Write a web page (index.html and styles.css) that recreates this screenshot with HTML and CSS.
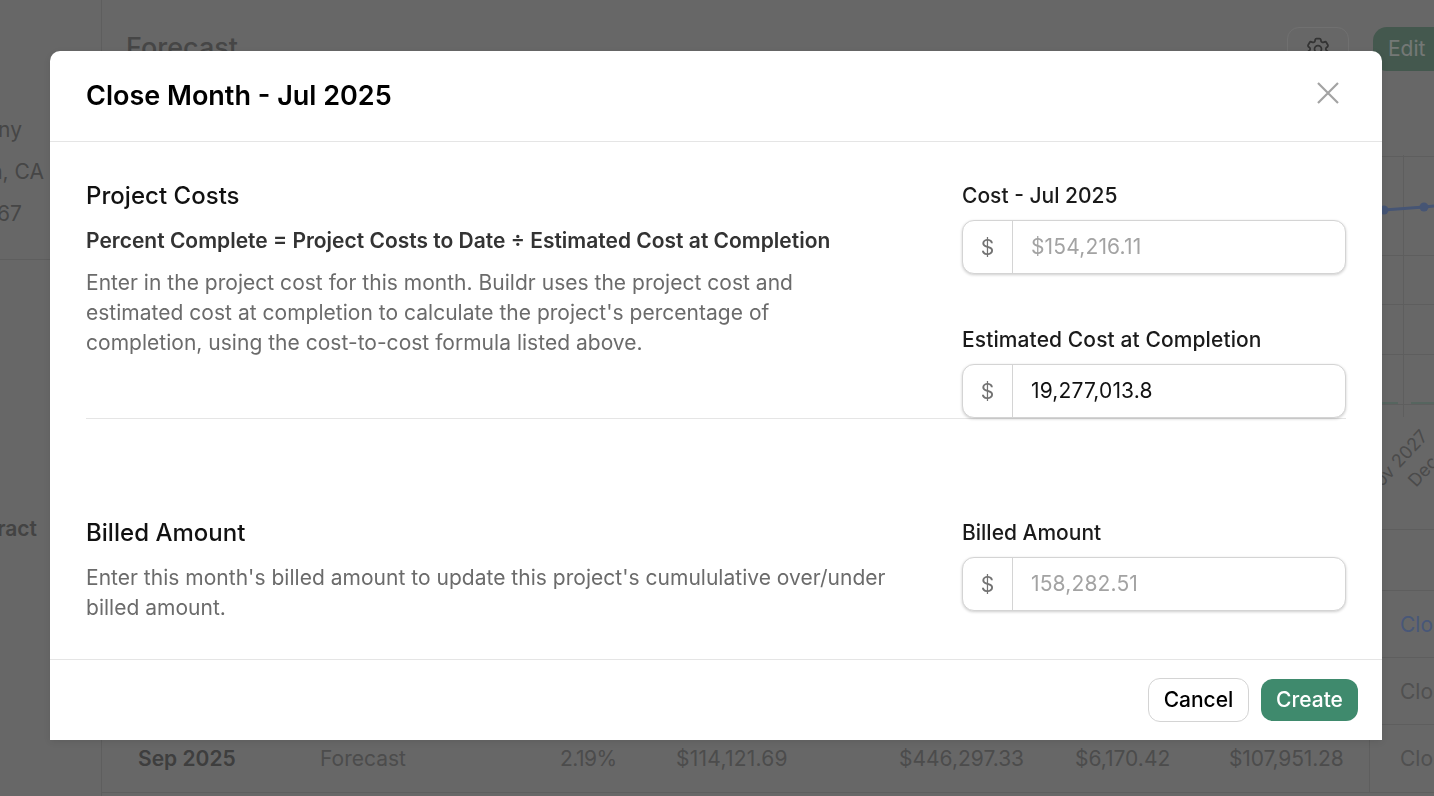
FILE: index.html
```html
<!DOCTYPE html>
<html lang="en">
<head>
<meta charset="utf-8">
<title>Close Month - Jul 2025</title>
<link rel="stylesheet" href="styles.css">
</head>
<body>
<div class="page">
  <aside class="sidebar">
    <div class="side-info">
      <div class="side-line l1">Company</div>
      <div class="side-line l2">Boston, CA</div>
      <div class="side-line l3">1234567</div>
    </div>
    <div class="side-line l4">Contract</div>
  </aside>
  <main class="main">
    <div class="topbar">
      <h2 class="forecast-title">Forecast</h2>
      <div class="top-actions">
        <span class="gear-btn">
          <svg width="28" height="28" viewBox="0 0 24 24" fill="none" stroke="#666" stroke-width="1.5" stroke-linecap="round" stroke-linejoin="round"><path d="M9.594 3.94c.09-.542.56-.94 1.11-.94h2.593c.55 0 1.02.398 1.11.94l.213 1.281c.063.374.313.686.645.87.074.04.147.083.22.127.324.196.72.257 1.075.124l1.217-.456a1.125 1.125 0 011.37.49l1.296 2.247a1.125 1.125 0 01-.26 1.431l-1.003.827c-.293.24-.438.613-.431.992a6.759 6.759 0 010 .255c-.007.378.138.75.43.99l1.005.828c.424.35.534.954.26 1.43l-1.298 2.247a1.125 1.125 0 01-1.369.491l-1.217-.456c-.355-.133-.75-.072-1.076.124a6.57 6.57 0 01-.22.128c-.331.183-.581.495-.644.869l-.213 1.28c-.09.543-.56.941-1.11.941h-2.594c-.55 0-1.02-.398-1.11-.94l-.213-1.281c-.062-.374-.312-.686-.644-.87a6.52 6.52 0 01-.22-.127c-.325-.196-.72-.257-1.076-.124l-1.217.456a1.125 1.125 0 01-1.369-.49l-1.297-2.247a1.125 1.125 0 01.26-1.431l1.004-.827c.292-.24.437-.613.43-.992a6.932 6.932 0 010-.255c.007-.378-.138-.75-.43-.99l-1.004-.828a1.125 1.125 0 01-.26-1.43l1.297-2.247a1.125 1.125 0 011.37-.491l1.216.456c.356.133.751.072 1.076-.124.072-.044.146-.087.22-.128.332-.183.582-.495.644-.869l.214-1.281z"/><path d="M15 12a3 3 0 11-6 0 3 3 0 016 0z"/></svg>
        </span>
        <span class="edit-btn">Edit</span>
      </div>
    </div>
    <div class="chart">
      <svg class="chart-svg" width="1332" height="374" viewBox="0 0 1332 374" fill="none">
        <g class="grid">
          <path d="M0 1.5H1332M0 100.5H1332M0 149.5H1332M0 199.5H1332M0 249.5H1332"/>
          <path d="M1301.5 0V262"/>
        </g>
        <path class="series" d="M1282 55 L1322 52 L1332 51"/>
        <circle class="dot" cx="1282" cy="55" r="4.5"/>
        <circle class="dot" cx="1322" cy="52" r="4.5"/>
        <path class="series-green" d="M1280 248H1296M1309 248H1332"/>
        <text transform="translate(1327 282) rotate(-47)" text-anchor="end" class="tick">Nov 2027</text>
        <text transform="translate(1314 333) rotate(-47)" class="tick">Dec 2027</text>
      </svg>
    </div>
    <div class="table">
      <div class="row row-spacer"></div>
      <div class="row"><span class="close-link blue">Close</span></div>
      <div class="row"><span class="close-link">Close</span></div>
      <div class="row row-last">
        <span class="c-month">Sep 2025</span>
        <span class="c-cell">Forecast</span>
        <span class="c-cell c-pct">2.19%</span>
        <span class="c-cell c-a">$114,121.69</span>
        <span class="c-cell">$446,297.33</span>
        <span class="c-cell">$6,170.42</span>
        <span class="c-cell c-d">$107,951.28</span>
        <span class="close-link">Close</span>
      </div>
    </div>
  </main>
</div>

<div class="overlay">
  <section class="modal">
    <header class="modal-header">
      <h1 class="modal-title">Close Month - Jul 2025</h1>
      <button class="close-x" aria-label="Close">
        <svg width="24" height="24" viewBox="0 0 24 24" fill="none" stroke="#a3a3a3" stroke-width="2.2"><path d="M2 2L22 22M22 2L2 22"/></svg>
      </button>
    </header>
    <div class="modal-body">
      <div class="section section-costs">
        <div class="section-text">
          <h3 class="section-title">Project Costs</h3>
          <p class="formula">Percent Complete = Project Costs to Date ÷ Estimated Cost at Completion</p>
          <p class="desc">Enter in the project cost for this month. Buildr uses the project cost and estimated cost at completion to calculate the project's percentage of completion, using the cost-to-cost formula listed above.</p>
        </div>
        <div class="fields">
          <div class="field">
            <label class="field-label">Cost - Jul 2025</label>
            <div class="input-group"><span class="addon">$</span><span class="value placeholder">$154,216.11</span></div>
          </div>
          <div class="field">
            <label class="field-label label-long">Estimated Cost at Completion</label>
            <div class="input-group"><span class="addon">$</span><span class="value">19,277,013.8</span></div>
          </div>
        </div>
      </div>
      <div class="section section-billed">
        <div class="section-text">
          <h3 class="section-title">Billed Amount</h3>
          <p class="desc">Enter this month's billed amount to update this project's cumululative over/under billed amount.</p>
        </div>
        <div class="fields">
          <div class="field">
            <label class="field-label">Billed Amount</label>
            <div class="input-group"><span class="addon">$</span><span class="value placeholder">158,282.51</span></div>
          </div>
        </div>
      </div>
    </div>
    <footer class="modal-footer">
      <button class="btn btn-cancel">Cancel</button>
      <button class="btn btn-create">Create</button>
    </footer>
  </section>
</div>
</body>
</html>
```
FILE: styles.css
```css
* { box-sizing: border-box; }
html, body { margin: 0; height: 100%; overflow: hidden; }
body { font-family: Inter, "Liberation Sans", sans-serif; color: #111; background: #cfcfcf; }

/* backdrop page */
.page { display: flex; width: 1434px; height: 796px; overflow: hidden; background: #cfcfcf; color: #8c8c8c; }
.sidebar { width: 102px; flex: none; border-right: 1px solid #bcbcbc; padding-top: 115px; font-size: 21px; }
.side-info { height: 145px; border-bottom: 1px solid #bcbcbc; }
.side-line { line-height: 30px; margin-bottom: 12px; display: flex; justify-content: flex-end; white-space: nowrap; }
.l1 { padding-right: 79px; }
.l2 { padding-right: 57px; }
.l3 { padding-right: 79px; }
.l4 { margin-top: 254px; padding-right: 64px; font-weight: 600; color: #868686; }
.main { flex: 1; min-width: 0; display: flex; flex-direction: column; }
.topbar { height: 155px; flex: none; display: flex; align-items: flex-start; justify-content: space-between; padding: 27px 0 0 24px; }
.forecast-title { margin: 1px 0 0; font-size: 27px; line-height: 40px; font-weight: 500; color: #8c8c8c; }
.top-actions { display: flex; gap: 24px; width: 147px; flex: none; }
.gear-btn { width: 62px; height: 44px; border: 1px solid #e0e0e0; border-radius: 12px; display: flex; align-items: center; justify-content: center; flex: none; }
.edit-btn { width: 90px; height: 44px; border-radius: 14px; background: #88b09c; color: #e8f0ec; font-size: 21px; line-height: 44px; padding-left: 15px; flex: none; }
.chart { height: 374px; flex: none; }
.chart-svg { display: block; }
.grid { stroke: #bcbcbc; stroke-width: 1; }
.series { stroke: #8caae8; stroke-width: 3; }
.dot { fill: #8caae8; }
.series-green { stroke: #accabe; stroke-width: 2; }
.tick { font: 400 18px Inter, sans-serif; fill: #969696; }
.table { flex: 1; border-top: 1px solid #bcbcbc; }
.row { height: 67px; border-bottom: 1px solid #bcbcbc; display: grid; grid-template-columns: 36px 182px 240px 116px 223px 176px 154px 140px 1fr; align-items: center; font-size: 21px; color: #989898; white-space: nowrap; }
.row-spacer { height: 61px; }
.row-last { height: 68px; }
.close-link { grid-column: 9; align-self: stretch; display: flex; align-items: center; padding-left: 30px; border-left: 1px solid #bcbcbc; color: #a0a0a0; }
.close-link.blue { color: #90aef0; }
.c-month { grid-column: 2; font-weight: 600; color: #7c7c7c; }
.c-cell { color: #989898; }
.c-pct { letter-spacing: -.5px; }
.c-a { letter-spacing: .25px; }
.c-d { letter-spacing: -.15px; }

/* modal */
.overlay { position: fixed; inset: 0; background: rgba(0, 0, 0, .5); }
.modal { position: absolute; left: 50px; top: 51px; width: 1332px; height: 689px; background: #fff; border-radius: 10px 10px 0 0; display: flex; flex-direction: column; box-shadow: 0 2px 8px rgba(0, 0, 0, .1); }
.modal-header { height: 91px; flex: none; border-bottom: 1px solid #e5e5e5; padding: 0 36px; display: flex; align-items: center; justify-content: space-between; }
.modal-title { margin: 0 0 1px; font-size: 27px; line-height: 36px; font-weight: 600; color: #000; }
.close-x { border: 0; padding: 0; background: none; display: block; height: 24px; margin: 0 6px 6px 0; }
.modal-body { flex: 1; padding: 0 36px; }
.section { display: grid; grid-template-columns: 1fr 384px; column-gap: 74px; }
.section-costs { padding-top: 36px; height: 277px; border-bottom: 1px solid #e5e5e5; }
.section-billed { padding-top: 96px; }
.section-title { margin: 0; font-size: 24px; line-height: 36px; font-weight: 500; color: #111; letter-spacing: .03px; }
.formula { margin: 12px 0 0; font-size: 21px; line-height: 30px; font-weight: 600; color: #333; }
.desc { margin: 12px 0 0; font-size: 21px; line-height: 30px; color: #6b6b6b; letter-spacing: .02px; }
.fields { display: flex; flex-direction: column; gap: 48px; }
.field-label { display: block; font-size: 21px; line-height: 36px; font-weight: 500; color: #1a1a1a; margin-bottom: 6px; }
.label-long { letter-spacing: .1px; }
.input-group { display: flex; height: 54px; border: 1px solid #d4d4d4; border-radius: 12px; box-shadow: 0 1px 3px rgba(0, 0, 0, .2); background: #fff; font-size: 21px; }
.addon { width: 50px; flex: none; border-right: 1px solid #d4d4d4; display: flex; align-items: center; justify-content: center; color: #737373; }
.value { flex: 1; padding: 0 0 1px 18px; display: flex; align-items: center; color: #111; letter-spacing: .15px; }
.placeholder { color: #a3a3a3; }
.modal-footer { height: 81px; flex: none; border-top: 1px solid #e5e5e5; padding: 0 24px; display: flex; align-items: center; justify-content: flex-end; gap: 12px; }
.btn { font-family: Inter, "Liberation Sans", sans-serif; font-size: 21px; font-weight: 500; border-radius: 12px; padding: 0 0 2px; }
.btn-cancel { width: 101px; height: 44px; background: #fff; border: 1px solid #d4d4d4; color: #000; }
.btn-create { width: 97px; height: 42px; background: #3f8a6d; border: 0; color: #fff; }
```
